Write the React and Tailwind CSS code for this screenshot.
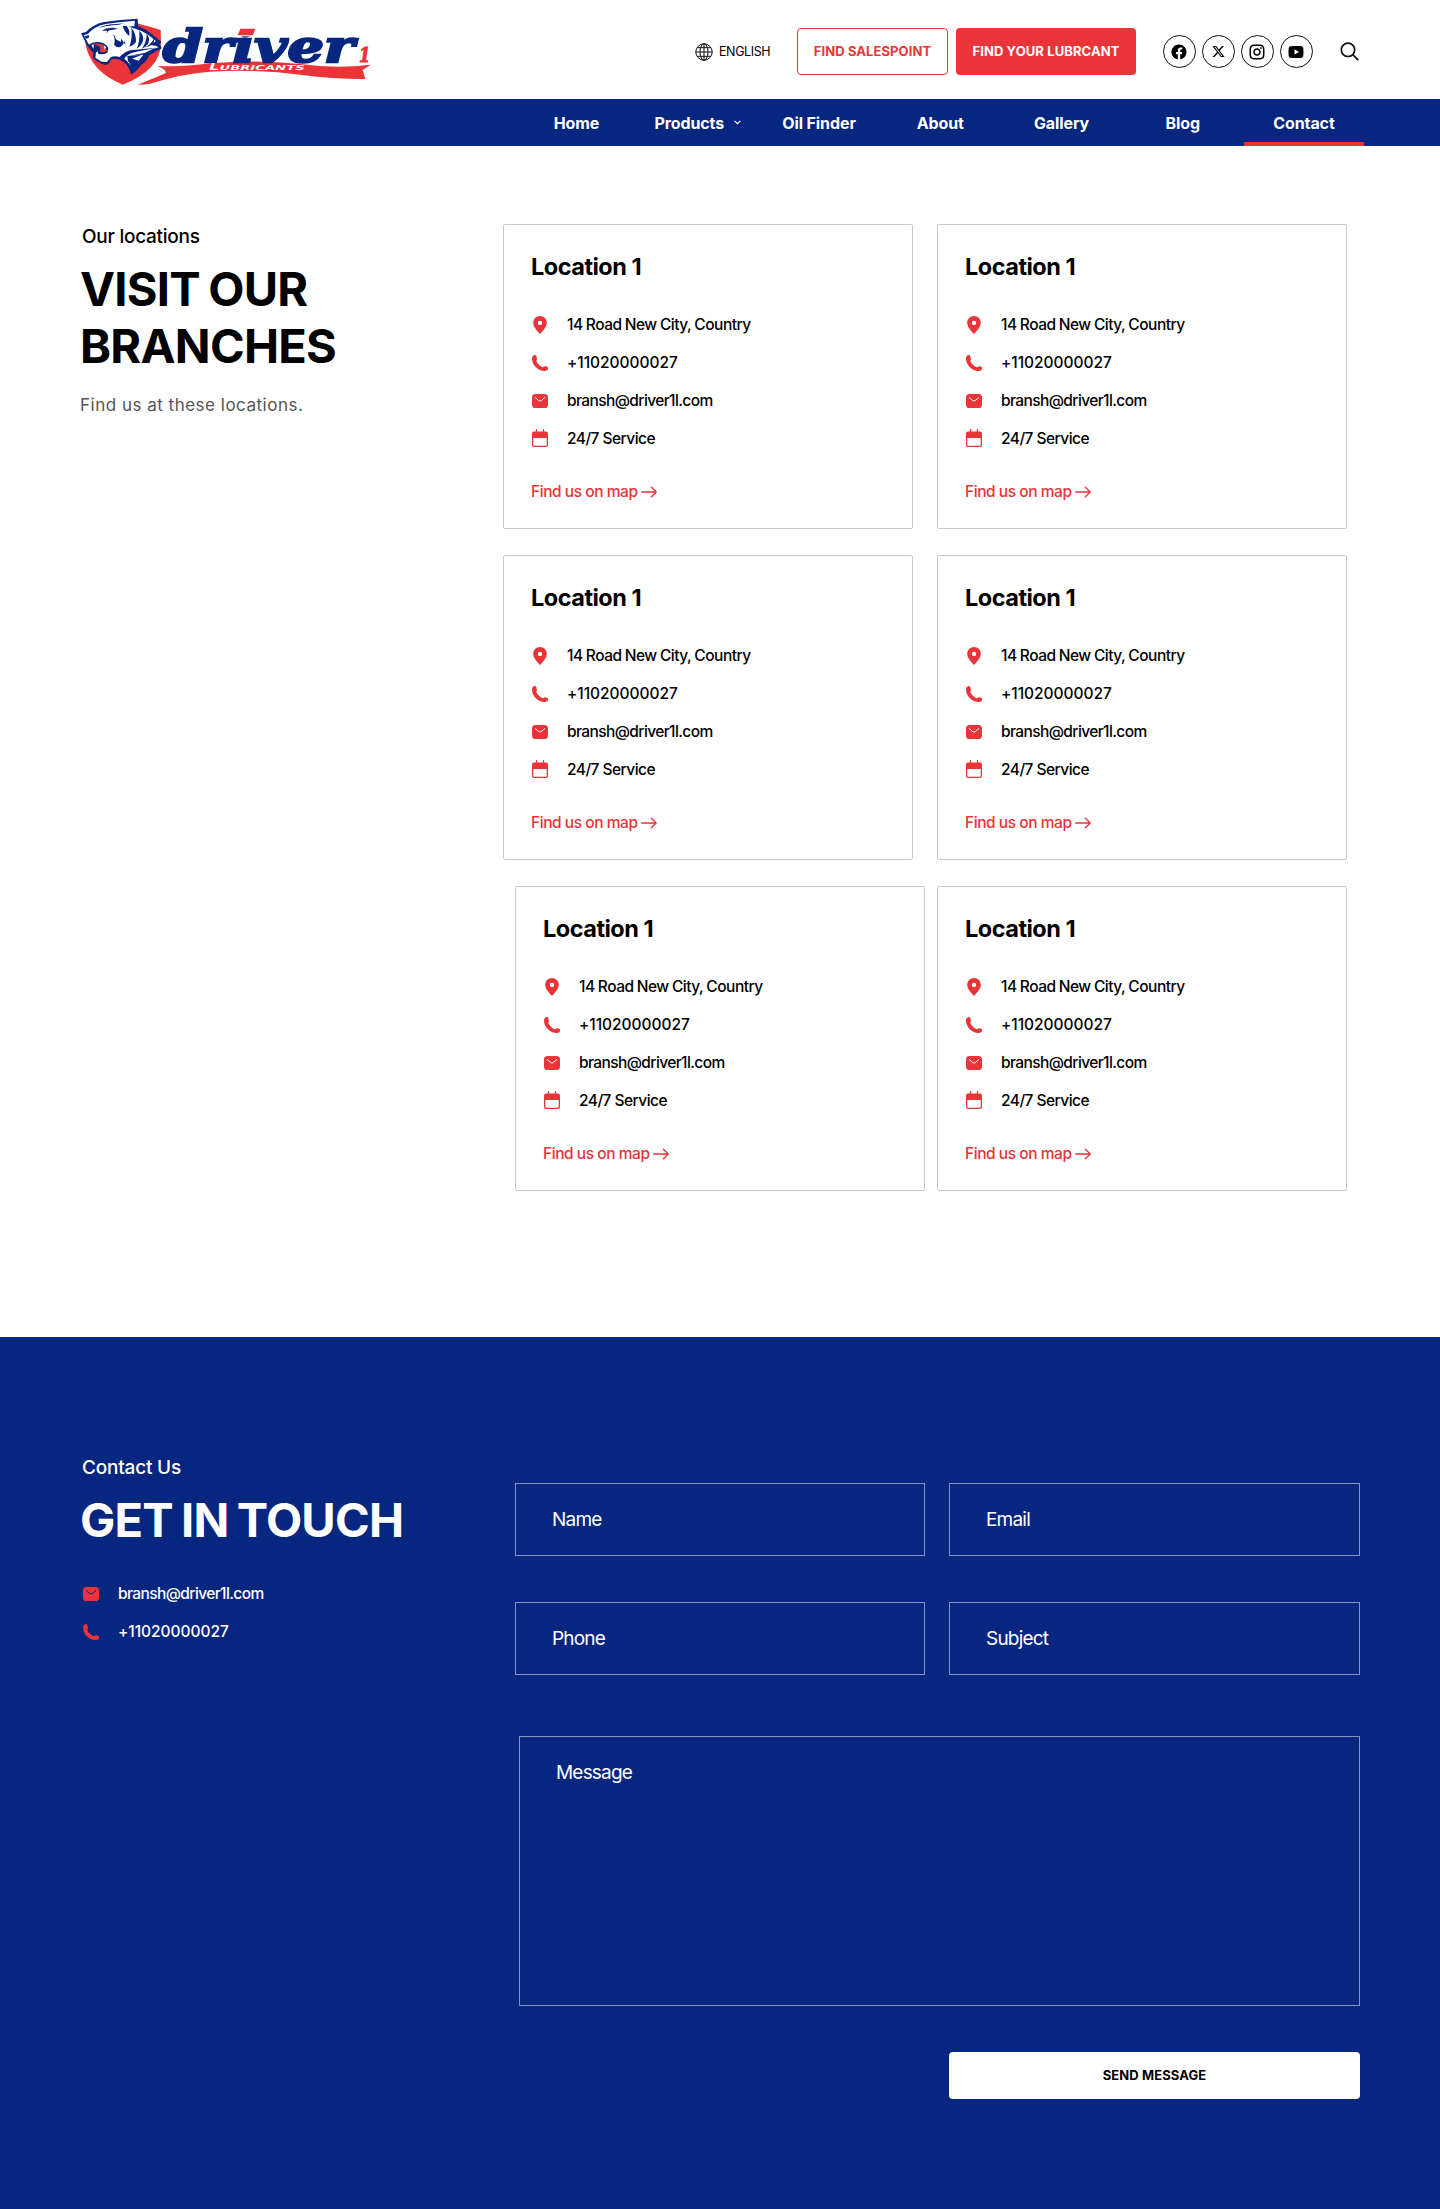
import { RiFacebookCircleFill, RiTwitterXFill, RiInstagramLine, RiYoutubeFill } from "react-icons/ri";

function Logo() {
  return (
    <svg viewBox="0 0 930 255" className="h-[85px] w-[310px] shrink-0">
      <g transform="translate(24 12)">
        <path fill="#e93439" d="M176 28Q215 38 248 48L249 90Q246 168 134 212Q36 172 22 88L60 60Z" />
        <path fill="#072680" d="M9 58L24 54Q44 32 78 24L128 18L179 14L180 36Q206 46 226 64L250 84L243 92Q252 96 250 104Q232 112 214 124Q204 146 190 152Q180 168 160 182Q152 156 138 144Q124 134 108 134L100 136L92 150Q80 154 72 150Q52 140 45 132L46 116Q26 96 20 80Z" />
        <path fill="#fff" d="M17 64L30 59Q48 38 82 30L130 24L171 20L169 36L152 38L172 44Q206 54 234 82L214 94Q232 92 242 100Q222 104 202 116L152 126Q180 122 196 122L182 140L156 132Q150 140 158 158Q150 140 134 132Q112 122 98 130L88 143Q76 146 68 142L52 131L54 118Q72 124 88 116L91 102Q82 86 60 84Q42 84 33 92Z" />
        <path fill="#e93439" d="M39 91Q66 84 84 99L86 112Q76 118 64 112Q70 104 64 97Q54 91 39 91Z" />
        <path fill="#fff" d="M40 92L48 92L46 105ZM58 111L62 121L52 119ZM77 93L84 99L80 108Z" />
        <g fill="#072680">
          <path d="M70 50Q86 40 106 41L120 45L94 49L84 58L88 50Z" />
          <path d="M60 42Q84 30 116 30L138 28Q124 34 104 34Q82 36 60 42Z" />
          <path d="M19 66L34 64L32 72L24 74Z" />
          <path d="M104 60Q112 64 114 76L128 84L130 74L142 92L141 80Q126 112 108 92Q114 76 104 60Z" />
          <path d="M134 36Q140 56 154 66Q156 48 146 36Z" />
          <path d="M160 42Q174 56 174 84Q168 94 154 98Q164 74 160 42Z" />
          <path d="M184 50Q200 64 194 84Q188 98 176 104Q186 82 184 50Z" />
          <path d="M206 60Q218 72 210 90Q202 100 192 104Q206 84 206 60Z" />
          <path d="M228 74Q230 86 220 92Q212 98 200 100Q218 92 228 74Z" />
          <path d="M122 132Q144 108 164 108L236 101Q198 108 172 114Q148 118 138 136L150 154Z" />
          <path d="M148 126L192 122L162 134L166 156L150 142Z" />
        </g>
      </g>
      <path fill="#e93439" d="M263 168Q335 172 420 160Q560 148 690 162Q800 177 902 164L878 180L886 207Q800 208 690 194Q560 177 420 185Q340 190 240 221Q220 225 203 224Q240 210 286 190Q292 180 263 168Z" />
      <text x="278" y="157" textLength="574" lengthAdjust="spacingAndGlyphs" fill="#072680" stroke="#072680" strokeWidth="7" className="font-['DejaVu_Serif'] text-[137px] font-bold italic">driver</text>
      <path fill="#fff" d="M498 40H564V79H498Z" />
      <path fill="#e93439" d="M511 56H556L549 76H503Z" />
      <text x="867" y="156" textLength="34" lengthAdjust="spacingAndGlyphs" fill="#e93439" stroke="#e93439" strokeWidth="3" className="font-['DejaVu_Serif'] text-[60px] font-bold italic">1</text>
      <text x="418" y="181" textLength="286" lengthAdjust="spacingAndGlyphs" fill="#fff" className="font-['DejaVu_Sans'] text-[20px] font-bold italic"><tspan className="text-[24px]">L</tspan>UBRICANTS</text>
    </svg>
  );
}

function GlobeIcon() {
  return (
    <svg viewBox="0 0 18 18" fill="none" stroke="#111" strokeWidth="1" className="size-[18px]">
      <circle cx="9" cy="9" r="8.2" />
      <ellipse cx="9" cy="9" rx="4" ry="8.2" />
      <path d="M9 .8V17.2M.8 9H17.2M2.3 4.7H15.7M2.3 13.3H15.7" />
    </svg>
  );
}

function SearchIcon() {
  return (
    <svg viewBox="0 0 20 20" fill="none" stroke="#111" strokeWidth="1.7" className="size-5">
      <circle cx="8" cy="7.8" r="6.7" />
      <path d="M12.8 12.6L18.3 18.2" />
    </svg>
  );
}

function PinIcon() {
  return (
    <svg viewBox="0 0 16 18" className="-mt-px h-[18px] w-4" fill="#e93439">
      <path fillRule="evenodd" d="M8 0C4.1 0 1.2 3 1.2 6.8C1.2 11 4.8 14.5 8 18C11.2 14.5 14.8 11 14.8 6.8C14.8 3 11.9 0 8 0ZM8 4.7A2.2 2.2 0 1 1 8 9.1A2.2 2.2 0 1 1 8 4.7Z" />
    </svg>
  );
}

function PhoneIcon() {
  return (
    <svg viewBox="0 0 16 16" className="size-4" fill="#e93439">
      <path d="M1.2.7C.3 1.4 0 2.5 0 4C.3 10.2 6 16 12.5 16C14 16 15.3 15.4 16 14.2V12.8C16 12 14.8 11.5 13.1 11.2C12 11 11.5 12.5 10.7 12.2C8 11.2 5.6 8.8 4.4 6.2C4.1 5.4 5.1 4.9 4.9 4C4.7 2 4.2.4 3.4.1C2.6-.1 1.8.2 1.2.7Z" />
    </svg>
  );
}

function MailIcon({ flap = "#fff" }) {
  return (
    <svg viewBox="0 0 16 14" className="-mt-px h-3.5 w-4" fill="none">
      <rect width="16" height="14" rx="3.6" fill="#e93439" />
      <path d="M3.2 3.6L6.8 6.6Q8 7.5 9.2 6.6L12.8 3.6" stroke={flap} strokeWidth="1" strokeLinecap="round" />
    </svg>
  );
}

function CalendarIcon() {
  return (
    <svg viewBox="0 0 16 18" className="-mt-0.5 h-[18px] w-4" fill="#e93439">
      <path fillRule="evenodd" d="M2 2.6H14Q16 2.6 16 4.6V16Q16 18 14 18H2Q0 18 0 16V4.6Q0 2.6 2 2.6ZM1.3 8.9V15.7Q1.3 16.7 2.3 16.7H13.7Q14.7 16.7 14.7 15.7V8.9Z" />
      <path d="M3.9 0H5.1V3.6H3.9ZM10.9 0H12.1V3.6H10.9Z" />
    </svg>
  );
}

function ArrowIcon() {
  return (
    <svg viewBox="0 0 16 12" className="h-3 w-4" fill="none" stroke="#e93439" strokeWidth="1.3" strokeLinecap="round" strokeLinejoin="round">
      <path d="M.7 6H15.2M10.4 1.2L15.2 6L10.4 10.8" />
    </svg>
  );
}

function InfoRow({ icon, text, tracking }) {
  return (
    <div className="flex h-[38px] items-center gap-[19px]">
      {icon}
      <span className={`text-[15.5px] font-medium whitespace-nowrap ${tracking}`}>{text}</span>
    </div>
  );
}

function LocationCard() {
  return (
    <article className="h-[305px] w-[410px] rounded-[2px] border border-[#c9c9c9] px-7 pt-[27px]">
      <h2 className="-ml-px text-[23.5px] leading-[30px] font-bold tracking-[-0.5px]">Location 1</h2>
      <div className="mt-6">
        <InfoRow icon={<PinIcon />} text="14 Road New City, Country" tracking="tracking-[-0.48px] [word-spacing:-0.5px]" />
        <InfoRow icon={<PhoneIcon />} text="+11020000027" tracking="tracking-[-0.03px]" />
        <InfoRow icon={<MailIcon />} text="bransh@driver1l.com" tracking="tracking-[-0.6px]" />
        <InfoRow icon={<CalendarIcon />} text="24/7 Service" tracking="tracking-[-0.53px]" />
      </div>
      <a href="#map" className="mt-[21px] -ml-px flex h-[25px] items-center gap-[3px] text-[15.5px] font-medium tracking-[-0.45px] text-[#e93439]">
        Find us on map
        <ArrowIcon />
      </a>
    </article>
  );
}

function SocialButton({ children }) {
  return <a href="#social" className="flex size-[33px] items-center justify-center rounded-full border border-[#111]">{children}</a>;
}

function NavItem({ label, active, menu }) {
  return (
    <a href="#nav" className={`flex h-[47px] w-[120px] items-center justify-center whitespace-nowrap ${active ? "border-b-4 border-[#e93439] pt-1" : ""}`}>
      {label}
      {menu && (
        <svg viewBox="0 0 7 5" className="ml-[10px] h-[5px] w-[7px]" fill="none" stroke="#fff" strokeWidth="1.1">
          <path d="M.6.8L3.5 3.7L6.4.8" />
        </svg>
      )}
    </a>
  );
}

function Field({ label, className }) {
  return <div className={`flex h-[73px] items-center border border-white/50 pt-0.5 pl-[36px] text-[19px] tracking-[-0.8px] ${className}`}>{label}</div>;
}

export default function App() {
  return (
    <div className="min-h-[2209px] w-[1440px] bg-white font-['Inter',sans-serif] text-black">
      <header>
        <div className="flex h-[99px] items-start pt-[10px] pl-[70px]">
          <Logo />
          <div className="mt-[18px] ml-[315px] flex h-[47px] items-center">
            <div className="flex w-[102px] items-center gap-[6px]">
              <GlobeIcon />
              <span className="pt-0.5 text-[12.5px] tracking-[-0.4px]">ENGLISH</span>
            </div>
            <a href="#sales" className="flex h-[47px] w-[151px] items-center justify-center rounded-[4px] border border-[#e93439] text-[13px] font-bold tracking-[0.08px] text-[#e93439]">FIND SALESPOINT</a>
            <a href="#lubricant" className="ml-2 flex h-[47px] w-[180px] items-center justify-center rounded-[4px] bg-[#e93439] text-[13px] font-bold tracking-[0.1px] text-white">FIND YOUR LUBRCANT</a>
            <div className="ml-[26.5px] flex gap-[6px]">
              <SocialButton><RiFacebookCircleFill className="size-[18px]" /></SocialButton>
              <SocialButton><RiTwitterXFill className="size-[15px]" /></SocialButton>
              <SocialButton><RiInstagramLine className="size-[18px]" /></SocialButton>
              <SocialButton><RiYoutubeFill className="size-[18px]" /></SocialButton>
            </div>
            <div className="ml-[27px]"><SearchIcon /></div>
          </div>
        </div>
        <nav className="flex h-[47px] justify-end gap-[1.25px] bg-[#072680] pr-[76px] text-[16px] font-bold tracking-[-0.1px] text-white">
          <NavItem label="Home" />
          <NavItem label="Products" menu />
          <NavItem label="Oil Finder" />
          <NavItem label="About" />
          <NavItem label="Gallery" />
          <NavItem label="Blog" />
          <NavItem label="Contact" active />
        </nav>
      </header>

      <section className="flex h-[1191px] pt-[78px] pl-20">
        <div className="w-[423px]">
          <p className="pt-px pl-[2px] text-[19px] leading-6 font-medium tracking-[-0.25px]">Our locations</p>
          <h1 className="mt-[10.5px] text-[47px] leading-[57px] font-bold tracking-[-0.75px] [word-spacing:-2px]">
            VISIT OUR<br />BRANCHES
          </h1>
          <p className="mt-[19px] text-[17px] leading-6 tracking-[0.5px] text-[#555]">Find us at these locations.</p>
        </div>
        <div className="flex flex-col gap-[26px]">
          <div className="flex gap-6"><LocationCard /><LocationCard /></div>
          <div className="flex gap-6"><LocationCard /><LocationCard /></div>
          <div className="flex gap-3 pl-3"><LocationCard /><LocationCard /></div>
        </div>
      </section>

      <section className="flex h-[872px] bg-[#072680] pt-[118px] pl-20 text-white">
        <div className="w-[435px]">
          <p className="pt-px pl-[2px] text-[19px] leading-6 font-medium tracking-[-0.2px]">Contact Us</p>
          <h2 className="mt-[11px] text-[47px] leading-[57px] font-bold tracking-[-0.8px] [word-spacing:-2px]">GET IN TOUCH</h2>
          <div className="mt-[27px] pl-[3px]">
            <InfoRow icon={<MailIcon flap="#072680" />} text="bransh@driver1l.com" tracking="tracking-[-0.6px]" />
            <InfoRow icon={<PhoneIcon />} text="+11020000027" tracking="tracking-[-0.03px]" />
          </div>
        </div>
        <form className="flex w-[845px] flex-col pt-7">
          <div className="flex justify-between">
            <Field label="Name" className="w-[410px]" />
            <Field label="Email" className="w-[411px]" />
          </div>
          <div className="mt-[46px] flex justify-between">
            <Field label="Phone" className="w-[410px]" />
            <Field label="Subject" className="w-[411px]" />
          </div>
          <div className="mt-[61px] ml-1 h-[270px] border border-white/50 pt-6 pl-[36px] text-[19px] leading-6 tracking-[-0.8px]">Message</div>
          <button type="button" className="mt-[46px] h-[47px] w-[411px] self-end rounded-[4px] bg-white text-[13px] font-bold tracking-[0.1px] text-black">SEND MESSAGE</button>
        </form>
      </section>
    </div>
  );
}
